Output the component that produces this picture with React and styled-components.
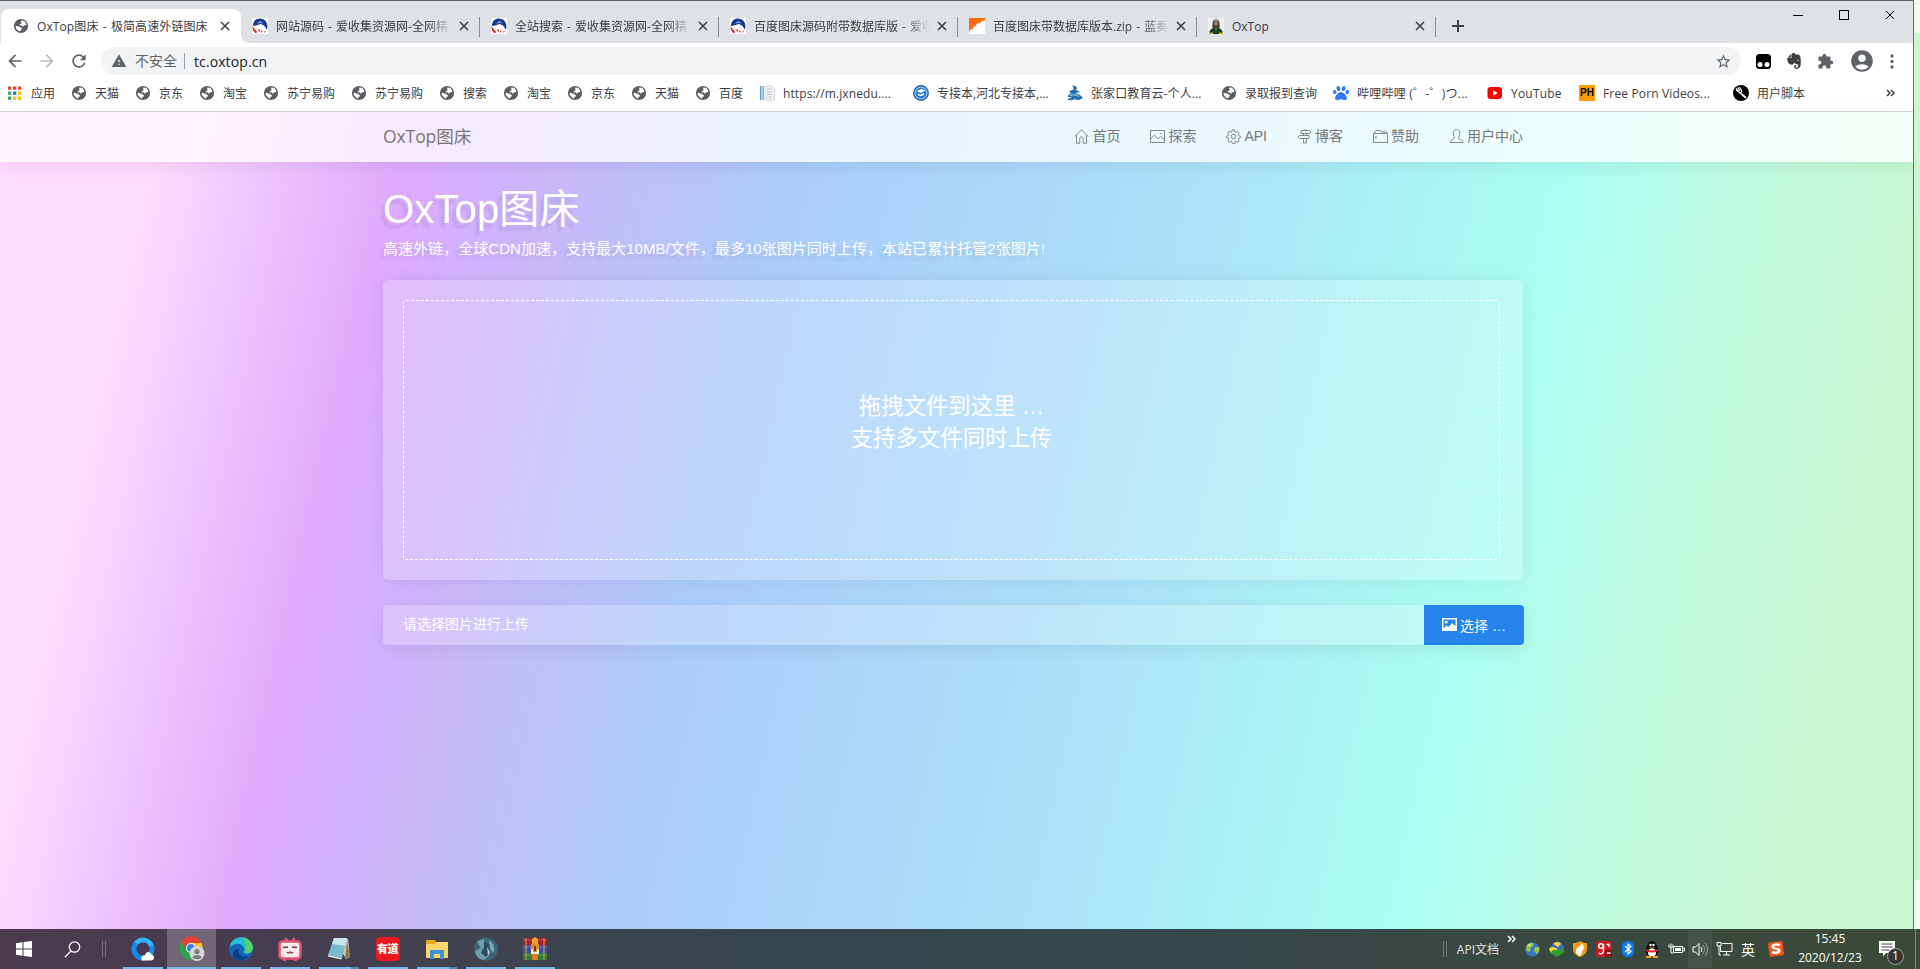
import React from 'react';
import styled, { createGlobalStyle, css } from 'styled-components';
import { MdExtension, MdAccountCircle, MdStarBorder, MdWarning, MdRefresh, MdArrowBack, MdArrowForward } from 'react-icons/md';
import { SiEvernote } from 'react-icons/si';
import { FaPaw } from 'react-icons/fa';

const Global = createGlobalStyle`
  * { box-sizing: border-box; }
  html, body { margin: 0; padding: 0; }
  body { width: 1920px; height: 969px; overflow: hidden; background: #c8f7d0; font-family: "Open Sans", "Noto Sans CJK SC", sans-serif; }
  svg { display: block; flex: none; }
`;

const Screen = styled.div`
  display: flex;
  flex-direction: column;
  width: 1920px;
  height: 969px;
  overflow: hidden;
`;
const Desktop = styled.div`
  display: flex;
  height: 929px;
`;
const Browser = styled.div`
  width: 1914px;
  display: flex;
  flex-direction: column;
  border-top: 1px solid #626568;
  border-right: 1px solid #6b6f6c;
`;
const DesktopEdge = styled.div`
  flex: 1;
  background: linear-gradient(#f2fdf2 33px, #c8f7d0 33px, #c8f7d0 880px, #f2fdf2 880px);
`;

/* ---------- browser tabs ---------- */
const TabStrip = styled.div`
  height: 42px;
  background: #dee1e6;
  display: flex;
  padding: 8px 0 0 1px;
`;
const Tab = styled.div`
  position: relative;
  width: ${(p) => (p.$active ? 240 : 239)}px;
  height: 34px;
  display: flex;
  align-items: center;
  padding-left: ${(p) => (p.$active ? 12 : 11)}px;
  color: #3c4043;
  font-size: 12px;
  ${(p) => p.$active ? css`
    background: #fff;
    border-radius: 8px 8px 0 0;
    &::after {
      content: '';
      position: absolute;
      left: 100%;
      bottom: 0;
      width: 8px;
      height: 8px;
      background: radial-gradient(circle at 100% 0, transparent 7.5px, #fff 8px);
    }
  ` : css`
    &::after {
      content: '';
      position: absolute;
      right: 0;
      top: 8px;
      width: 1px;
      height: 20px;
      background: #8a8d91;
    }
  `}
`;
const TabTitle = styled.span`
  width: ${(p) => (p.$active ? 179 : 176)}px;
  margin-left: 8px;
  padding-top: 2px;
  white-space: nowrap;
  line-height: 20px;
  word-spacing: 1px;
  letter-spacing: ${(p) => (p.$active ? 0.1 : 0)}px;
  ${(p) => p.$fade && 'mask-image: linear-gradient(90deg, #000 150px, transparent 176px);'}
`;
const TabClose = styled.span`
  margin-left: ${(p) => (p.$active ? 4 : 7)}px;
`;
const NewTab = styled.div`
  padding: 11px 0 0 16px;
`;
const WindowButtons = styled.div`
  margin-left: auto;
  display: flex;
  gap: 36px;
  padding: 1px 18px 0 0;
`;

/* ---------- toolbar ---------- */
const Toolbar = styled.div`
  height: 37px;
  background: #fff;
  display: flex;
  align-items: center;
  padding: 0 19px 1px 5px;
  color: #5f6368;
`;
const NavButtons = styled.div`
  display: flex;
  gap: 12px;
  width: 96px;
`;
const Omnibox = styled.div`
  width: 1640px;
  height: 28px;
  border-radius: 14px;
  background: #f1f3f4;
  display: flex;
  align-items: center;
  padding: 0 9px 0 10px;
  font-size: 14px;
`;
const Security = styled.span`
  margin-left: 8px;
  padding-right: 7px;
  line-height: 16px;
  border-right: 1px solid #9aa0a6;
`;
const Address = styled.span`
  flex: 1;
  margin-left: 9px;
  color: #202124;
  letter-spacing: 0.1px;
`;
const Extensions = styled.div`
  flex: 1;
  display: flex;
  align-items: center;
  justify-content: space-between;
  padding-left: 15px;
`;

/* ---------- bookmarks ---------- */
const BookmarkBar = styled.div`
  height: 32px;
  background: #fff;
  border-bottom: 1px solid #d9dadd;
  display: flex;
  align-items: center;
  padding: 0 18px 5px 7px;
  color: #3c4043;
  font-size: 12px;
`;
const Bookmark = styled.div`
  width: ${(p) => p.$width}px;
  display: flex;
  align-items: center;
  gap: 8px;
  white-space: nowrap;
`;
const BookmarkLabel = styled.span`
  padding-top: 2px;
  line-height: 18px;
  letter-spacing: ${(p) => p.$spacing || 0}px;
`;
const More = styled.div`
  margin-left: auto;
`;
const SquareBadge = styled.span`
  width: 16px;
  height: 16px;
  background: #ff9c00;
  color: #000;
  font: 700 10px/16px "Liberation Sans", sans-serif;
  text-align: center;
`;

/* ---------- site ---------- */
const Page = styled.main`
  flex: 1;
  background: linear-gradient(102.5deg, #fedbff 0%, #fedbff 7.8%, #f3cdfd 11.3%, #deaafd 19.8%, #c6bafb 28.5%, #abccfc 38.2%, #abdff8 55.500%, #aafdf3 75.2%, #bdf9e0 84%, #c8f7d0 93%);
  font-family: "Liberation Sans", "Noto Sans CJK SC", sans-serif;
  color: #fff;
`;
const Header = styled.header`
  height: 50px;
  background: rgba(255, 255, 255, 0.75);
  box-shadow: 0 2px 20px rgba(0, 0, 0, 0.08);
  display: flex;
  align-items: center;
  padding: 0 390px 2px 383px;
  color: #777;
`;
const Brand = styled.div`
  font: 17.6px/24px "Open Sans", "Noto Sans CJK SC", sans-serif;
  letter-spacing: -0.15px;
`;
const Menu = styled.nav`
  margin-left: auto;
  display: flex;
  gap: 30px;
`;
const MenuItem = styled.a`
  display: flex;
  align-items: center;
  gap: 3px;
  font-size: 14px;
  line-height: 20px;
`;
const Content = styled.section`
  width: 1141px;
  margin-left: 383px;
  padding-top: 20px;
`;
const Title = styled.h1`
  margin: 0;
  font-size: 40px;
  font-weight: 400;
  line-height: 54px;
  letter-spacing: 0.15px;
  text-shadow: -4px 5px 3px rgba(60, 60, 100, 0.13);
`;
const Intro = styled.p`
  margin: 3px 0 0;
  font-size: 15px;
  line-height: 20px;
  letter-spacing: 0.04px;
  white-space: nowrap;
  text-shadow: -4px 5px 3px rgba(60, 60, 100, 0.11);
`;
const DropCard = styled.div`
  width: 1140px;
  height: 300px;
  margin-top: 21px;
  padding: 20px 23px 20px 20px;
  border-radius: 5px;
  background: rgba(255, 255, 255, 0.22);
  box-shadow: 0 0 20px rgba(0, 0, 0, 0.07);
`;
const DropZone = styled.div`
  height: 260px;
  border: 1px dashed #fff;
  border-radius: 3px;
  display: flex;
  flex-direction: column;
  justify-content: center;
  padding-bottom: 14px;
  text-align: center;
  font-size: 22.4px;
  line-height: 32px;
`;
const FileRow = styled.div`
  display: flex;
  height: 40px;
  margin-top: 25px;
  border-radius: 4px;
  box-shadow: 0 4px 18px rgba(0, 0, 0, 0.08);
  font-size: 14px;
`;
const FileName = styled.div`
  flex: 1;
  padding-left: 20px;
  line-height: 39px;
  border-radius: 4px 0 0 4px;
  background: rgba(255, 255, 255, 0.22);
`;
const PickButton = styled.button`
  width: 100px;
  border: 0;
  border-radius: 0 4px 4px 0;
  background: #2484ec;
  color: #fff;
  display: flex;
  align-items: center;
  gap: 3px;
  padding: 0 0 1px 18px;
  font: 14px "Liberation Sans", "Noto Sans CJK SC", sans-serif;
`;

/* ---------- taskbar ---------- */
const Taskbar = styled.footer`
  height: 40px;
  background: linear-gradient(90deg, #4b3b4d 0, #483b51 220px, #40424f 480px, #36454e 640px, #35474d 1100px, #38493f 1560px, #3b4939 1920px);
  display: flex;
  color: #fff;
`;
const StartArea = styled.div`
  width: 118px;
  display: flex;
  align-items: center;
  padding-left: 16px;
  gap: 32px;
`;
const Grip = styled.span`
  width: 4px;
  height: 16px;
  margin-left: ${(p) => p.$shift || 0}px;
  border: solid #74717a;
  border-width: 0 1px;
`;
const TaskButton = styled.div`
  position: relative;
  width: 49px;
  height: 40px;
  display: flex;
  align-items: center;
  justify-content: center;
  background: ${(p) => (p.$active ? 'rgba(255,255,255,.22)' : 'transparent')};
  &::after {
    content: '';
    position: absolute;
    left: ${(p) => (p.$active ? 0 : 5)}px;
    right: ${(p) => (p.$active ? 0 : 4)}px;
    bottom: 0;
    height: 2px;
    background: ${(p) => (p.$stacked ? 'linear-gradient(90deg,#76b9ed 32px,#5287ae 32px)' : '#76b9ed')};
  }
`;
const YoudaoBadge = styled.span`
  width: 24px;
  height: 24px;
  border-radius: 4px;
  background: #e6191c;
  font: 900 11px/23px "Noto Sans CJK SC", sans-serif;
  text-align: center;
  letter-spacing: -0.5px;
`;
const TrayLink = styled.div`
  margin-left: auto;
  display: flex;
  align-items: center;
  font-size: 12px;
  color: #e2e5e2;
  gap: 10px;
`;
const Overflow = styled.div`
  padding: 6px 0 0 8px;
  width: 21px;
`;
const TrayIcon = styled.div`
  width: 24px;
  height: 38px;
  margin: 1px 0 0 ${(p) => p.$shift || 0}px;
  display: flex;
  align-items: center;
  justify-content: center;
  font-size: 14px;
  background: ${(p) => (p.$hover ? 'rgba(255,255,255,.06)' : 'none')};
`;
const Clock = styled.div`
  width: 78px;
  margin-left: 3px;
  text-align: center;
  font-size: 12px;
  line-height: 19px;
`;
const Notice = styled.div`
  position: relative;
  width: 46px;
  padding: 12px 0 0 10px;
`;
const Count = styled.span`
  position: absolute;
  left: 18px;
  top: 19px;
  width: 17px;
  height: 17px;
  border: 1px solid #9b9f9b;
  border-radius: 50%;
  background: #333733;
  font-size: 12px;
  line-height: 14px;
  text-align: center;
`;
const ShowDesktop = styled.div`
  width: 5px;
  border-left: 1px solid #7c857c;
`;

/* ---------- drawings ---------- */
const Globe = () => (
  <svg width="16" height="16" viewBox="0 0 16 16">
    <circle cx="8" cy="8" r="7.1" fill="#5a5e63" />
    <path d="M8.4 2.6c2.4-.3 4.5 1.5 5.1 3.8-.8.8-1.2 1.2-2.2.8-.9.2-.6 1.4-1.4 1.7-.6-.2-.4-1.2-1.2-1.4-.8-.1-1.5.1-2-.5-.5-1.1 1.8-1 1.8-2.2 0-.8-.7-1.3-.1-2.2z" fill="#fff" />
    <path d="M2.500 8.100c1.800-.1 3.300.1 4.600.9.7.5 1.100 1.100 2 1.400-.1 1-1.200.8-1.400 1.700-.1.8-.5 1.300-1.200 1.200C4.300 12.700 2.600 10.700 2.500 8.100z" fill="#fff" />
  </svg>
);
const Rocket = () => (
  <svg width="16" height="16" viewBox="0 0 16 16">
    <rect width="16" height="16" fill="#fff" />
    <path d="M1 8C1 3 4 .5 8 .5S15.400 3.500 15.400 8c0 1.800-.4 2.700-1.300 3.600-.3-2.300-1.400-4-3.100-4.700L8.500 6 4 7.600z" fill="#11398f" />
    <path d="M.5 8.200 5.200 14l-1.200 1.300C1.500 14 .3 11.500.5 8.200zM6 11l1.200 3.800 1-2.800zm3 1.200.5 3 1.300-2zm3.200 1.300.5 1.700 1.300-2.700z" fill="#e32e20" />
    <path d="M6 5.500c1-2 3.500-2 4.500-.2M6.500 7l-1.300 4M9 6.500l.3 4.500M11.500 8l1 3" stroke="#fff" fill="none" strokeWidth=".9" />
  </svg>
);
const Lanzou = () => (
  <svg width="16" height="16"><rect width="16" height="16" fill="#fff" /><path d="M0 0h16v2.500c-2.500 0-4 1-5 2.800C9 4.500 7.300 6 7 8c-2-.3-2.800 1.200-3.500 3.200C2 11 .8 12 0 14z" fill="#ff6a0a" /></svg>
);
const Avatar = () => (
  <svg width="16" height="16"><rect width="16" height="16" fill="#eceff0" /><path d="M4.500 10C4 5 5 1 8 .800s4 4.500 3.500 9.200z" fill="#4a3b33" /><path d="M5 3C6 0 10 0 11 3z" fill="#9aa09f" /><ellipse cx="8" cy="5.500" rx="1.800" ry="2.300" fill="#a48370" /><path d="M1 16c0-3 2-5.500 4.500-6h5C13 10.500 15 13 15 16z" fill="#163a20" /><path d="m6.500 10 1.500 4 1.500-4z" fill="#1f8a36" /><path d="M1 14.500h4v1.500H1zm10 0h4v1.500h-4z" fill="#d1b81b" /></svg>
);
const Cross = ({ size = 10, color = '#3c4043', weight = 1.6 }) => (
  <svg width={size} height={size} viewBox="0 0 10 10"><path d="m1 1 8 8M9 1 1 9" stroke={color} strokeWidth={weight} /></svg>
);
const Apps = () => (
  <svg width="16" height="16">{['#ea4335', '#ea4335', '#ea4335', '#34a853', '#1a73e8', '#fbbc04', '#34a853', '#fbbc04', '#fbbc04'].map((c, i) => (
    <rect key={i} x={1 + (i % 3) * 5} y={1.5 + Math.floor(i / 3) * 5} width="3.300" height="3.300" fill={c} />
  ))}</svg>
);
const DocIcon = () => (
  <svg width="16" height="16"><path d="M1 1h4v14H1z" fill="#5f9fca" /><path d="M2 1h2.500v14H2z" fill="#a7cfe8" /><path d="M6 1h7l2.500 3v11H6z" fill="#eef1f3" stroke="#d5dade" /><path d="M8 4h4M8 7h5M8 9.500h5M8 12h5" stroke="#c1c8cd" /></svg>
);
const RoundBlue = () => (
  <svg width="16" height="16"><circle cx="8" cy="8" r="7.200" fill="#b5daf7" stroke="#1863b5" strokeWidth="1.500" /><circle cx="8" cy="8" r="5.500" fill="#2f80cf" /><path d="m3.500 6.300 5-2.300 3.800 1.500-4.500 2.300zM5 8.500c2 1.300 4 1.300 6-.5v1.500C9 11.500 6.500 11.200 5 10.300z" fill="#fff" /></svg>
);
const Wave = () => (
  <svg width="16" height="16"><path d="M5 .500c3 0 5 1 5 3.200-1 .3-1.500.8-1 1.500 2 .3 3 .8 3.800 1.800l-5 1.500c3 .2 5.500 1 8 4-2 2.500-5 3.200-8 1.500-2 1.200-5 2-7.500.3L5 12H1c-.5-2 1.500-3 3.500-3.500l-2-1c.5-1.800 2-2.500 3.500-2.700C7 3 6.500 2 5 .500z" fill="#1c6fb0" /><path d="M3 10.500c3-1 6-1 9 1" stroke="#bfe0f4" fill="none" /></svg>
);
const YouTube = () => (
  <svg width="16" height="16"><rect x=".5" y="2" width="14.500" height="12" rx="3" fill="#f00" /><path d="m6.200 5.200 4.500 2.800-4.500 2.800z" fill="#fff" /></svg>
);
const Forked = () => (
  <svg width="16" height="16"><circle cx="8" cy="8" r="8" fill="#000" /><path d="M3 3.500 6 7l6.500 6M4.600 2.500 7 5.800M6.300 2.200 8.500 5.200C9 7 8 8 6.500 7.500L3 5" stroke="#fff" strokeWidth="1.200" fill="none" /><path d="m8 7.500 5.500 4.500-1.300 1.500z" fill="#fff" /></svg>
);
const Chevrons = ({ color = '#3c4043' }) => (
  <svg width="9" height="8" viewBox="0 0 9 8"><path d="m1 1 3 3-3 3M5 1l3 3-3 3" stroke={color} strokeWidth="1.500" fill="none" /></svg>
);
const Tamper = () => (
  <svg width="15" height="15"><rect width="15" height="15" rx="3.500" fill="#000" /><circle cx="4" cy="10.500" r="2.500" fill="#fff" /><circle cx="11" cy="10.500" r="2.500" fill="#fff" /></svg>
);
const Dots = () => (
  <svg width="4" height="15"><circle cx="2" cy="2" r="1.700" fill="#5f6368" /><circle cx="2" cy="7.500" r="1.700" fill="#5f6368" /><circle cx="2" cy="13" r="1.700" fill="#5f6368" /></svg>
);
const LINE_ICONS = {
  home: <><path d="M.8 7.500 7.500.8l6.700 6.700" /><path d="M2.500 6.200v8h3.300V9.500c0-2.200 3.400-2.200 3.400 0v4.700h3.300v-8" /></>,
  image: <><path d="M.5 1.500h14v12H.5z" /><path d="m1 9.500 3.500-3.300L8 10l2.500-2.500L14 10.500" /><path d="M10 4.500h1.500" /></>,
  gear: <><circle cx="7.500" cy="7.500" r="2.300" /><path d="m6.200.9-.3 1.900-1.200.5-1.600-1-1.200 1.400.9 1.600-.5 1.300-1.700.5v1.400l1.700.5.5 1.300-.9 1.600 1.300 1.300 1.600-.9 1.200.5.4 1.800h2.200l.4-1.800 1.200-.5 1.700.9 1.200-1.300-.9-1.600.5-1.300 1.700-.5V7.100l-1.700-.5-.5-1.300.9-1.600-1.300-1.400-1.600 1L8.900 2.800 8.500.9z" /></>,
  sign: <><path d="M4 1.500h8.500L14 3l-1.500 1.500H4zM12 6.500H2.500L1 8l1.500 1.500H12zM6.500 4.500v2M9.500 4.500v2M6.500 9.500V14h3V9.500M8 0v1.500" /></>,
  wallet: <><path d="M.5 4.500h14v9H.5zM1 4.500 3 1.500h4.500L8.500 3h5v1.500" /><path d="M3 7v3" /></>,
  user: <><path d="M7.500.5C3.500.5 4 5 5 7.300c.5 1.500.5 2.500-1 3.200-2 .8-3 1.300-3 3h13c0-1.700-1-2.200-3-3-1.500-.7-1.500-1.700-1-3.200C11 5 11.500.5 7.500.5z" /></>,
};
const LineIcon = ({ name }) => (
  <svg width="15" height="15" fill="none" stroke="#858585" strokeWidth="1">{LINE_ICONS[name]}</svg>
);
const Picture = () => (
  <svg width="15" height="13"><path fillRule="evenodd" d="M0 0h15v13H0zM1.500 1.500v9l3-3 2 1.500 3.500-4 3.500 3v-6.500z" fill="#fff" /><circle cx="4.200" cy="4.200" r="1.400" fill="#fff" /></svg>
);

const QQBrowser = () => (
  <svg width="24" height="24"><circle cx="12" cy="12" r="9" fill="none" stroke="#1687ee" strokeWidth="5" /><path d="M5 6A9 9 0 0 1 20.500 9" fill="none" stroke="#35b8fb" strokeWidth="4" /><path d="M11 23.500c-2-3.500 1-6 3-5.200 1-4.500 6-4 6.500-.5 3.500.3 3.500 5.700-.5 5.700z" fill="#fff" /></svg>
);
const Chrome = () => (
  <svg width="26" height="26"><circle cx="12" cy="12" r="11.500" fill="#2ba24c" /><path d="M2 6A11.500 11.500 0 0 1 22.500 7H12a5 5 0 0 0-5 5z" fill="#e24235" /><path d="M12 7h10.500A11.500 11.500 0 0 1 12 23.500L17 13z" fill="#fbc116" /><circle cx="12" cy="12" r="5" fill="#fff" /><circle cx="12" cy="12" r="4" fill="#3a7de8" /><circle cx="18" cy="17.500" r="7.500" fill="#d6d6d6" /><circle cx="18" cy="15.500" r="2.600" fill="#7c7c7c" /><path d="M13.500 21.500c1-3.300 8-3.300 9 0-2 2-7 2-9 0z" fill="#7c7c7c" /></svg>
);
const Edge = () => (
  <svg width="24" height="24"><circle cx="12" cy="12" r="11.800" fill="#1565b8" /><path d="M.5 11C1.500 3.500 7 0 12.500.2 20 .5 24 6 23.800 11c-.2 5-5 6.300-9 4.800-1-1 1-1.500 .5-4C14.500 8 10 6 6 7.200 3 8 1.300 9.300.5 11z" fill="#2bbfd6" /><path d="M14 .4C20 1 24 6 23.800 11c-.2 4-4 5.800-7.500 5.200 2-5 1-10-2.300-15.800z" fill="#58d168" /><path d="M10 11.500c-2 5 2 9.500 10 7.500-4 5-12 6-15.500 1-2-4 1-8 5.500-8.500z" fill="#0b3f86" /></svg>
);
const Bili = () => (
  <svg width="24" height="24"><path d="m7 1 4 4M17 1l-4 4" stroke="#e35c78" strokeWidth="2" /><rect x="1.500" y="4.500" width="21" height="17" rx="3" fill="#fbe9ed" stroke="#e0526f" strokeWidth="2.500" /><path d="m5 10.500 5-.5M19 10.500l-5-.5M9 15c.8 1.500 2.200 1.500 3 0 .8 1.500 2.200 1.500 3 0" stroke="#7b3144" strokeWidth="1.300" fill="none" /><path d="M5 22h3v2H5zm11 0h3v2h-3z" fill="#e0526f" /></svg>
);
const Notepad = () => (
  <svg width="24" height="24"><path d="m7 1 14 1 2 18-4 2z" fill="#c9cbbd" /><path d="m20 4 3 16-5 2z" fill="#94733f" /><path d="M7 1h13l-5 20L1 18z" fill="#78bccb" /><path d="M7 1h13l-2 8-13-2z" fill="#c6e5ea" /><path d="m1 18 14 3-.5 1.500L1 19.500z" fill="#e5f3f4" /></svg>
);
const Folder = () => (
  <svg width="24" height="24"><path d="M1 3h9l2 3h11v15H1z" fill="#e8a81e" /><path d="M1 7h9l2-2h11v16H1z" fill="#fcd667" /><path d="M5 22v-9h14v9h-4v-5H9v5z" fill="#3b94dc" /></svg>
);
const Photo = () => (
  <svg width="24" height="24"><circle cx="12" cy="12" r="11.800" fill="#3b667a" /><path d="M3 5 9 2l4 4-2 7 4 6-5 4c-5 0-8-4-9-9l6-3z" fill="#6f9cac" /><path d="M15 3c4 3 6 7 5 13l-4-4z" fill="#7ba6b3" /><path d="m10 4 5 3 1 8-4 5-5-4 3-6z" fill="#294d5f" /><path d="m13 10 3 5-2 4z" fill="#b4cdd4" /></svg>
);
const WinRar = () => (
  <svg width="24" height="24"><path d="M0 1h24v7H0z" fill="#a5202f" /><path d="M0 8h24v8H0z" fill="#464aa0" /><path d="M0 16h24v7H0z" fill="#2f7b36" /><path d="M0 3h24M0 10h24M0 18h24" stroke="#fff" strokeOpacity=".25" strokeWidth="1.200" /><path d="M2.500 1h1v22h-1zm18 0h1v22h-1z" fill="#d0a13d" /><path d="M9 2 12 0l3 2v8H9z" fill="#e9a12f" /><rect x="8" y="7" width="8" height="10" fill="#e48d2b" /><path d="M8 12h2v3h4v-3h2v5H8z" fill="#eee" /><path d="M11 9h2v5h-2z" fill="#6c3c10" /><path d="M9 17h6v6H9z" fill="#dd7f26" /></svg>
);
const Earth = () => (
  <svg width="15" height="15"><circle cx="7.500" cy="7.500" r="7.200" fill="#3378c6" /><path d="M2 3c3-3 6-2 7-1L7 5 5 6l1 3-3 1C1 8 .5 5 2 3zm8 2 4 0c1 3 0 5-2 7l-3-3z" fill="#9bc34a" /><path d="m2 3 3-1 1 2z" fill="#f3f6b3" /></svg>
);
const Idm = () => (
  <svg width="17" height="16"><circle cx="9.500" cy="7" r="6.500" fill="#316fbe" /><path d="M5 3c3-3 7-2 8 0l-3 3zM1 8c2-3 6-2 8 0l3 4H3z" fill="#f1d343" /><path d="M5 9h8V6l4 5-8 5-7-4z" fill="#2d9c31" /></svg>
);
const Shield = () => (
  <svg width="14" height="16"><path d="M7 0c2 1.500 4 2 7 2v6c0 4-3 6.500-7 8-4-1.500-7-4-7-8V2c3 0 5-.5 7-2z" fill="#f59a12" /><path d="M8 2C9 6 2 6 3 11c1 3 3 3 4 4 3-2 1-4 3-6 2-3 0-6-2-7z" fill="#fff" /></svg>
);
const GPlus = () => (
  <svg width="16" height="16"><rect width="16" height="16" rx="2" fill="#c61c25" /><path d="M9 9h7v7H9z" fill="#8f0f17" /><circle cx="5" cy="5" r="2.300" fill="none" stroke="#fff" strokeWidth="1.500" /><path d="M7.500 3v7c0 3-3 3.500-4.500 2" fill="none" stroke="#fff" strokeWidth="1.400" /><path d="M10.500 3.500h2.500v2.500M11 12h3.500" stroke="#fff" strokeWidth="1.400" fill="none" /></svg>
);
const Bluetooth = () => (
  <svg width="12" height="16"><rect width="12" height="16" rx="5.500" fill="#0a7bf0" /><path d="m3 5 6 5.500L6 13V3l3 2.500L3 11" stroke="#fff" fill="none" strokeWidth="1.200" /></svg>
);
const Penguin = () => (
  <svg width="16" height="17"><ellipse cx="8" cy="9.500" rx="6.500" ry="6.500" fill="#111" /><ellipse cx="8" cy="5" rx="4.500" ry="5" fill="#111" /><ellipse cx="8" cy="11.500" rx="4" ry="4" fill="#fff" /><circle cx="6.500" cy="4" r="1.200" fill="#fff" /><circle cx="9.500" cy="4" r="1.200" fill="#fff" /><path d="M5 6.500h6L8 8z" fill="#f3a216" /><path d="M2 8c4 2 8 2 12 0v2C10 12 6 12 2 10z" fill="#e32222" /><path d="M2 15h5v2H2zm7 0h5v2H9z" fill="#f3a216" /></svg>
);
const Battery = () => (
  <svg width="17" height="12" fill="none" stroke="#fff"><path d="M5.500 3.500h9v6h-9zM15 5h1.500v3H15M3 .5v3M1 1.500v2.500h4V1.500M3 4v6h2" /><path d="M7 5h6v3H7z" fill="#fff" stroke="none" /></svg>
);
const Speaker = () => (
  <svg width="17" height="15" fill="none" stroke="#fff"><path d="M1 5h2.500L7 1.500v12L3.500 10H1z" /><path d="M9 5c1 1.500 1 3.500 0 5" /><path d="M11 3c2 3 2 6 0 9M13 1c3.300 4 3.300 9 0 13" stroke="#9ea49f" /></svg>
);
const Network = () => (
  <svg width="17" height="14" fill="none" stroke="#fff"><path d="M6 1.500h10v8H4.500V5M10.500 10v3M7 13h7M1 .5h4v3.500H1zM3 4v9h2" /></svg>
);
const Sogou = () => (
  <svg width="16" height="16"><path d="M1 1.500 14.500 0 16 14 2 16 0 4z" fill="#f4511e" /><path d="M12 4.200C8 2.500 4 4 4.500 6c.5 2 7 1.300 7 3.500 0 2-4 3-7.500 1.500" stroke="#fff" strokeWidth="2.500" fill="none" /></svg>
);

const TABS = [
  { title: 'OxTop图床 - 极简高速外链图床', icon: <Globe />, active: true },
  { title: '网站源码 - 爱收集资源网-全网精', icon: <Rocket />, fade: true },
  { title: '全站搜索 - 爱收集资源网-全网精', icon: <Rocket />, fade: true },
  { title: '百度图床源码附带数据库版 - 爱收', icon: <Rocket />, fade: true },
  { title: '百度图床带数据库版本.zip - 蓝奏', icon: <Lanzou />, fade: true },
  { title: 'OxTop', icon: <Avatar /> },
];
const BOOKMARKS = [
  ['应用', 64, <Apps />], ['天猫', 64, <Globe />], ['京东', 64, <Globe />], ['淘宝', 64, <Globe />],
  ['苏宁易购', 88, <Globe />], ['苏宁易购', 88, <Globe />], ['搜索', 64, <Globe />], ['淘宝', 64, <Globe />],
  ['京东', 64, <Globe />], ['天猫', 64, <Globe />], ['百度', 64, <Globe />],
  ['https://m.jxnedu....', 154, <DocIcon />, 0.1], ['专接本,河北专接本,...', 154, <RoundBlue />],
  ['张家口教育云-个人...', 154, <Wave />, 0.1], ['录取报到查询', 112, <Globe />],
  ['哔哩哔哩 (゜-゜)つ...', 154, <FaPaw size={16} color="#2a7df5" />, 0.25], ['YouTube', 92, <YouTube />, 0.2],
  ['Free Porn Videos...', 154, <SquareBadge>PH</SquareBadge>, 0.15], ['用户脚本', 80, <Forked />],
];
const MENU = [['home', '首页'], ['image', '探索'], ['gear', 'API'], ['sign', '博客'], ['wallet', '赞助'], ['user', '用户中心']];
const TASKS = [
  [<QQBrowser />], [<Chrome />, 'active'], [<Edge />], [<Bili />], [<Notepad />, 'stacked'],
  [<YoudaoBadge>有道</YoudaoBadge>], [<Folder />, 'stacked'], [<Photo />], [<WinRar />],
];
const TRAY = [<Earth />, <Idm />, <Shield />, <GPlus />, <Bluetooth />, <Penguin />, <Battery />, <Speaker />, <Network />, '英'];

export default function App() {
  return (
    <Screen>
      <Global />
      <Desktop>
        <Browser>
          <TabStrip>
            {TABS.map((t, i) => (
              <Tab key={i} $active={t.active}>
                {t.icon}
                <TabTitle $active={t.active} $fade={t.fade}>{t.title}</TabTitle>
                <TabClose $active={t.active}><Cross /></TabClose>
              </Tab>
            ))}
            <NewTab><svg width="12" height="12"><path d="M6 0v12M0 6h12" stroke="#3c4043" strokeWidth="2" /></svg></NewTab>
            <WindowButtons>
              <svg width="10" height="10"><path d="M0 5.500h10" stroke="#000" /></svg>
              <svg width="10" height="10"><rect x=".5" y=".5" width="9" height="9" fill="none" stroke="#000" /></svg>
              <Cross color="#000" weight={1} />
            </WindowButtons>
          </TabStrip>
          <Toolbar>
            <NavButtons><MdArrowBack size={20} /><MdArrowForward size={20} color="#babcbe" /><MdRefresh size={20} /></NavButtons>
            <Omnibox>
              <MdWarning size={16} />
              <Security>不安全</Security>
              <Address>tc.oxtop.cn</Address>
              <MdStarBorder size={17} />
            </Omnibox>
            <Extensions>
              <Tamper /><SiEvernote size={16} color="#3d4043" /><MdExtension size={17} /><MdAccountCircle size={26} /><Dots />
            </Extensions>
          </Toolbar>
          <BookmarkBar>
            {BOOKMARKS.map(([label, width, icon, spacing], i) => (
              <Bookmark key={i} $width={width}>{icon}<BookmarkLabel $spacing={spacing}>{label}</BookmarkLabel></Bookmark>
            ))}
            <More><Chevrons /></More>
          </BookmarkBar>
          <Page>
            <Header>
              <Brand>OxTop图床</Brand>
              <Menu>
                {MENU.map(([icon, label]) => <MenuItem key={icon}><LineIcon name={icon} />{label}</MenuItem>)}
              </Menu>
            </Header>
            <Content>
              <Title>OxTop图床</Title>
              <Intro>高速外链，全球CDN加速，支持最大10MB/文件，最多10张图片同时上传，本站已累计托管2张图片!</Intro>
              <DropCard>
                <DropZone><span>拖拽文件到这里 …</span><span>支持多文件同时上传</span></DropZone>
              </DropCard>
              <FileRow>
                <FileName>请选择图片进行上传</FileName>
                <PickButton><Picture />选择 …</PickButton>
              </FileRow>
            </Content>
          </Page>
        </Browser>
        <DesktopEdge />
      </Desktop>
      <Taskbar>
        <StartArea>
          <svg width="16" height="16"><path d="M0 2.200 6.500 1.300v6.200H0zM7.500 1.100 16 0v7.500H7.500zM0 8.500h6.500v6.200L0 13.800zM7.500 8.500H16V16l-8.500-1.100z" fill="#fff" /></svg>
          <svg width="17" height="17"><circle cx="10.500" cy="6" r="5.200" fill="none" stroke="#fff" strokeWidth="1.300" /><path d="M7 10 .8 16.200" stroke="#fff" strokeWidth="1.300" /></svg>
          <Grip $shift={-11} />
        </StartArea>
        {TASKS.map(([icon, state], i) => (
          <TaskButton key={i} $active={state === 'active'} $stacked={state === 'stacked'}>{icon}</TaskButton>
        ))}
        <TrayLink><Grip />API文档</TrayLink>
        <Overflow><Chevrons color="#fff" /></Overflow>
        {TRAY.map((icon, i) => <TrayIcon key={i} $hover={i === 7}>{icon}</TrayIcon>)}
        <TrayIcon $shift={4}><Sogou /></TrayIcon>
        <Clock>15:45<br />2020/12/23</Clock>
        <Notice>
          <svg width="16" height="16"><path d="M0 0h16v12H7l-3 3.500V12H0z" fill="#fff" /><path d="M2.500 3h11M2.500 6h11M2.500 9h8" stroke="#3c4a3e" /></svg>
          <Count>1</Count>
        </Notice>
        <ShowDesktop />
      </Taskbar>
    </Screen>
  );
}
